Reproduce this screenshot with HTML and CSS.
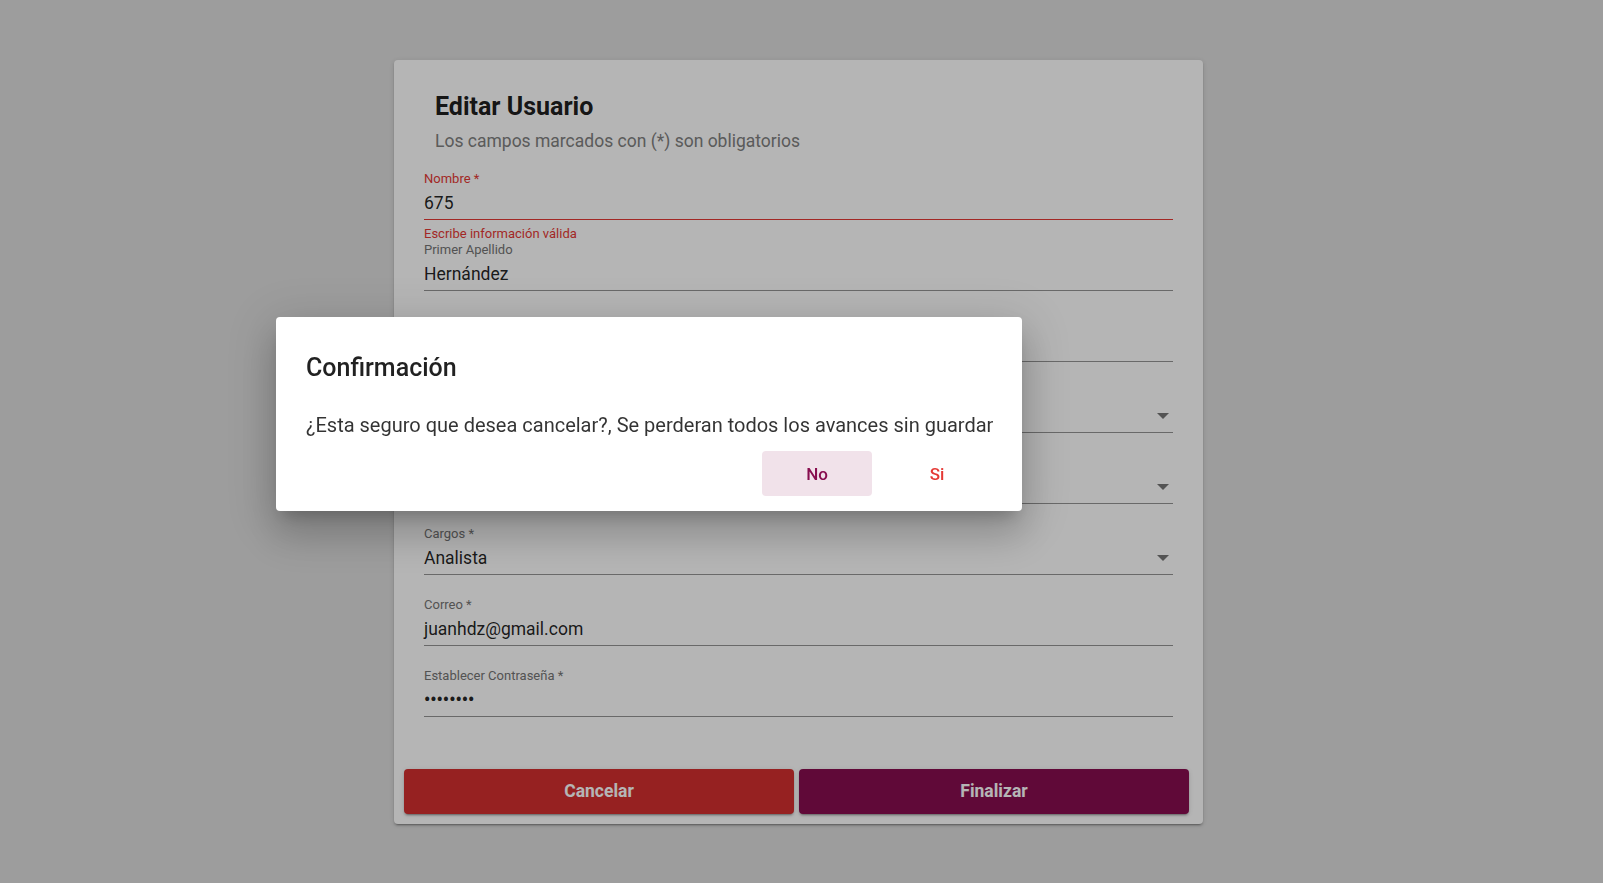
FILE: index.html
```html
<!DOCTYPE html>
<html lang="es">
<head>
<meta charset="utf-8">
<title>Editar Usuario</title>
<link rel="stylesheet" href="styles.css">
</head>
<body>
<div class="page">
  <section class="card">
    <div class="card-body">
      <h1 class="title">Editar Usuario</h1>
      <p class="subtitle">Los campos marcados con (*) son obligatorios</p>
      <div class="fields">
        <div class="field invalid">
          <div class="label">Nombre *</div>
          <div class="value"><span>675</span></div>
          <div class="line"></div>
          <div class="subscript"><div class="hint">Escribe información válida</div></div>
        </div>
        <div class="field">
          <div class="label">Primer Apellido</div>
          <div class="value"><span>Hernández</span></div>
          <div class="line"></div>
          <div class="subscript"></div>
        </div>
        <div class="field">
          <div class="label"></div>
          <div class="value"><span></span></div>
          <div class="line"></div>
          <div class="subscript"></div>
        </div>
        <div class="field">
          <div class="label"></div>
          <div class="value"><span></span><span class="arrow"></span></div>
          <div class="line"></div>
          <div class="subscript"></div>
        </div>
        <div class="field">
          <div class="label"></div>
          <div class="value"><span></span><span class="arrow"></span></div>
          <div class="line"></div>
          <div class="subscript"></div>
        </div>
        <div class="field">
          <div class="label">Cargos *</div>
          <div class="value"><span>Analista</span><span class="arrow"></span></div>
          <div class="line"></div>
          <div class="subscript"></div>
        </div>
        <div class="field">
          <div class="label">Correo *</div>
          <div class="value"><span>juanhdz@gmail.com</span></div>
          <div class="line"></div>
          <div class="subscript"></div>
        </div>
        <div class="field">
          <div class="label">Establecer Contraseña *</div>
          <div class="value"><span class="dots">••••••••</span></div>
          <div class="line"></div>
          <div class="subscript"></div>
        </div>
      </div>
    </div>
    <div class="actions">
      <button class="btn btn-cancel" type="button">Cancelar</button>
      <button class="btn btn-finish" type="button">Finalizar</button>
    </div>
  </section>
</div>
<div class="backdrop"></div>
<div class="dialog" role="dialog">
  <h2 class="dialog-title">Confirmación</h2>
  <p class="dialog-text">¿Esta seguro que desea cancelar?, Se perderan todos los avances sin guardar</p>
  <div class="dialog-actions">
    <button class="dbtn dbtn-no" type="button">No</button>
    <button class="dbtn dbtn-si" type="button">Si</button>
  </div>
</div>
</body>
</html>
```

FILE: styles.css
```css
html, body {
  margin: 0;
  height: 100%;
}

body {
  background: #dddddd;
  font-family: Roboto, "Liberation Sans", sans-serif;
  overflow: hidden;
}

.page {
  padding: 60px 0 0 394px;
}

.card {
  width: 809px;
  box-sizing: border-box;
  background: #ffffff;
  border-radius: 4px;
  padding: 33px 0 10.5px;
  box-shadow: 0 3px 1px -2px rgba(0,0,0,.2), 0 2px 2px 0 rgba(0,0,0,.14), 0 1px 5px 0 rgba(0,0,0,.12);
}

.card-body {
  padding: 0 30px;
}

.title {
  margin: 0 0 0 11px;
  font-size: 25px;
  line-height: 28px;
  font-weight: 700;
  color: rgba(0,0,0,.9);
}

.subtitle {
  margin: 8px 0 0 11px;
  font-size: 17.5px;
  line-height: 24px;
  color: #808080;
}

.fields {
  margin-top: 17.5px;
}

.label {
  height: 16px;
  font-size: 13px;
  line-height: 16px;
  color: #757575;
  white-space: nowrap;
}

.value {
  margin-top: 4px;
  height: 24px;
  display: flex;
  align-items: center;
  justify-content: space-between;
  font-size: 17.5px;
  line-height: 24px;
  color: rgba(0,0,0,.87);
  white-space: nowrap;
}

.dots {
  font-size: 17.5px;
  font-weight: 700;
}

.arrow {
  width: 0;
  height: 0;
  border-left: 6px solid transparent;
  border-right: 6px solid transparent;
  border-top: 6px solid #757575;
  margin-right: 4px;
}

.line {
  margin-top: 4px;
  height: 1px;
  background: #949494;
}

.subscript {
  height: 22.1px;
}

.hint {
  padding-top: 6px;
  font-size: 13px;
  line-height: 15px;
  color: #e53935;
  white-space: nowrap;
}

.invalid .label {
  color: #e53935;
}

.invalid .line {
  background: #e53935;
}

.actions {
  display: flex;
  gap: 5px;
  margin-top: 29.6px;
  padding: 0 14px 0 10px;
}

.btn {
  flex: 1;
  height: 45px;
  border: 0;
  border-radius: 4px;
  font-family: Roboto, "Liberation Sans", sans-serif;
  font-size: 17.5px;
  font-weight: 700;
  color: #ffffff;
  box-shadow: 0 3px 1px -2px rgba(0,0,0,.2), 0 2px 2px 0 rgba(0,0,0,.14), 0 1px 5px 0 rgba(0,0,0,.12);
}

.btn-cancel {
  background: #d32f2f;
}

.btn-finish {
  background: #880e4f;
}

.backdrop {
  position: fixed;
  inset: 0;
  background: rgba(0,0,0,.29);
}

.dialog {
  position: absolute;
  left: 276px;
  top: 317px;
  width: 746px;
  height: 194px;
  box-sizing: border-box;
  padding: 35px 30px 15px;
  background: #ffffff;
  border-radius: 4px;
  box-shadow: 0 11px 15px -7px rgba(0,0,0,.2), 0 24px 38px 3px rgba(0,0,0,.14), 0 9px 46px 8px rgba(0,0,0,.12);
}

.dialog-title {
  margin: 0;
  font-size: 25px;
  line-height: 32px;
  font-weight: 500;
  color: rgba(0,0,0,.87);
}

.dialog-text {
  margin: 28px 0 0;
  font-size: 20px;
  line-height: 26px;
  color: rgba(0,0,0,.8);
  white-space: nowrap;
}

.dialog-actions {
  margin-top: 13px;
  display: flex;
  justify-content: flex-end;
  gap: 10px;
}

.dbtn {
  width: 110px;
  height: 45px;
  border: 0;
  border-radius: 4px;
  background: transparent;
  font-family: Roboto, "Liberation Sans", sans-serif;
  font-size: 17px;
  font-weight: 500;
}

.dbtn-no {
  color: #880e4f;
  background: rgba(136,14,79,.12);
}

.dbtn-si {
  color: #e53935;
}
```
